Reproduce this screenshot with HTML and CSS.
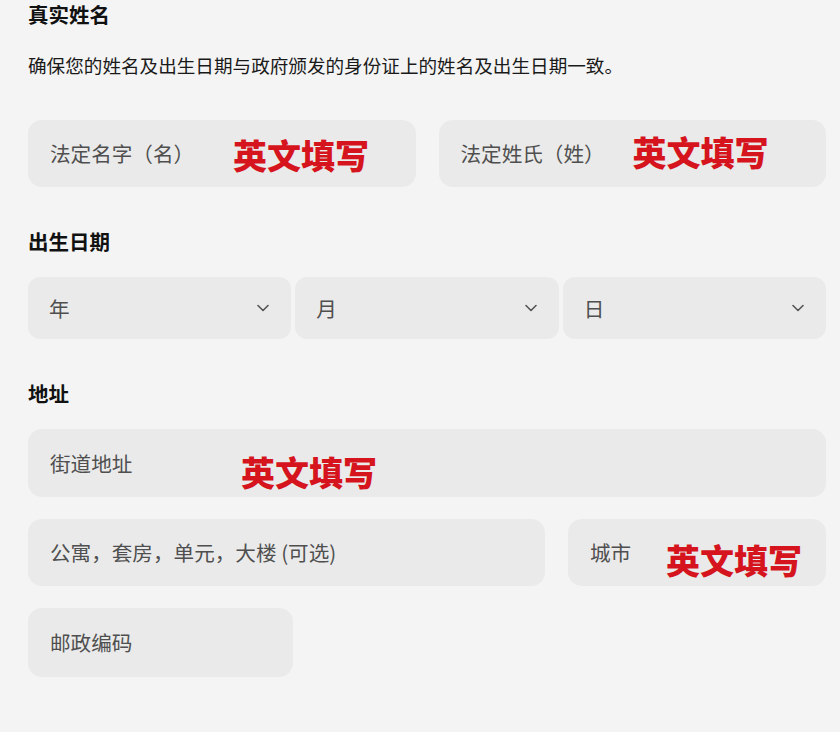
FILE: index.html
```html
<!DOCTYPE html>
<html lang="zh-CN">
<head>
    <meta charset="UTF-8">
    <meta name="viewport" content="width=device-width, initial-scale=1.0">
    <title>真实姓名</title>
    <link rel="stylesheet" href="styles.css">
</head>
<body>
    <form class="form">
        <h2>真实姓名</h2>
        <p class="hint">确保您的姓名及出生日期与政府颁发的身份证上的姓名及出生日期一致。</p>
        <div class="row two">
            <div class="field">
                <span class="placeholder">法定名字（名）</span>
                <span class="note note-first">英文填写</span>
            </div>
            <div class="field">
                <span class="placeholder">法定姓氏（姓）</span>
                <span class="note note-last">英文填写</span>
            </div>
        </div>

        <h2 class="section">出生日期</h2>
        <div class="row dates">
            <div class="field select">
                <span class="placeholder">年</span>
                <svg class="chevron" viewBox="0 0 12 8"><path d="M1 1.5 6 6.5 11 1.5"/></svg>
            </div>
            <div class="field select">
                <span class="placeholder">月</span>
                <svg class="chevron" viewBox="0 0 12 8"><path d="M1 1.5 6 6.5 11 1.5"/></svg>
            </div>
            <div class="field select">
                <span class="placeholder">日</span>
                <svg class="chevron" viewBox="0 0 12 8"><path d="M1 1.5 6 6.5 11 1.5"/></svg>
            </div>
        </div>

        <h2 class="section">地址</h2>
        <div class="field wide">
            <span class="placeholder">街道地址</span>
            <span class="note note-street">英文填写</span>
        </div>
        <div class="row address">
            <div class="field">
                <span class="placeholder">公寓，套房，单元，大楼 (可选)</span>
            </div>
            <div class="field">
                <span class="placeholder">城市</span>
                <span class="note note-city">英文填写</span>
            </div>
        </div>
        <div class="field postal">
            <span class="placeholder">邮政编码</span>
        </div>
    </form>
</body>
</html>
```

FILE: styles.css
```css
html, body {
    margin: 0;
    height: 100%;
    background: #f4f4f4;
}
body {
    font-family: "Noto Sans CJK SC", "Noto Sans", sans-serif;
    color: #111;
}
.form {
    width: 798px;
    padding-left: 28px;
    display: flex;
    flex-direction: column;
}
h2 {
    margin: 0;
    font-size: 20.5px;
    line-height: 28px;
    font-weight: 700;
}
h2.section {
    margin-top: 40px;
}
.hint {
    margin: 23px 0 0;
    font-size: 18.6px;
    line-height: 28px;
    color: #1a1a1a;
}
.row {
    display: grid;
    gap: 23px;
    margin-top: 22px;
}
.row.two {
    grid-template-columns: 1fr 1fr;
    margin-top: 41px;
}
.row.dates {
    grid-template-columns: 1fr 1fr 1fr;
    gap: 4px;
}
.row.address {
    grid-template-columns: 517px 1fr;
}
.field {
    position: relative;
    height: 67px;
    background: #eaeaea;
    border-radius: 14px;
    display: flex;
    align-items: center;
    padding: 0 22px;
    box-sizing: border-box;
}
.field.wide {
    margin-top: 22px;
    height: 68px;
}
.field.postal {
    width: 265px;
    margin-top: 22px;
    height: 69px;
}
.select {
    height: 62px;
    border-radius: 12px;
    justify-content: space-between;
    padding: 0 22px 0 21px;
}
.placeholder {
    font-size: 20.6px;
    color: #4f4f4f;
    line-height: 1;
}
.chevron {
    width: 12px;
    height: 8px;
    fill: none;
    stroke: #555;
    stroke-width: 1.6;
    stroke-linecap: round;
    stroke-linejoin: round;
}
.note {
    position: absolute;
    top: 50%;
    font-size: 34px;
    font-weight: 900;
    line-height: 1;
    color: #d5141d;
}
.note-first { left: 205px; margin-top: -16px; }
.note-last { left: 194px; margin-top: -19px; }
.note-street { left: 213px; margin-top: -8px; }
.note-city { left: 98px; margin-top: -10px; }
```
